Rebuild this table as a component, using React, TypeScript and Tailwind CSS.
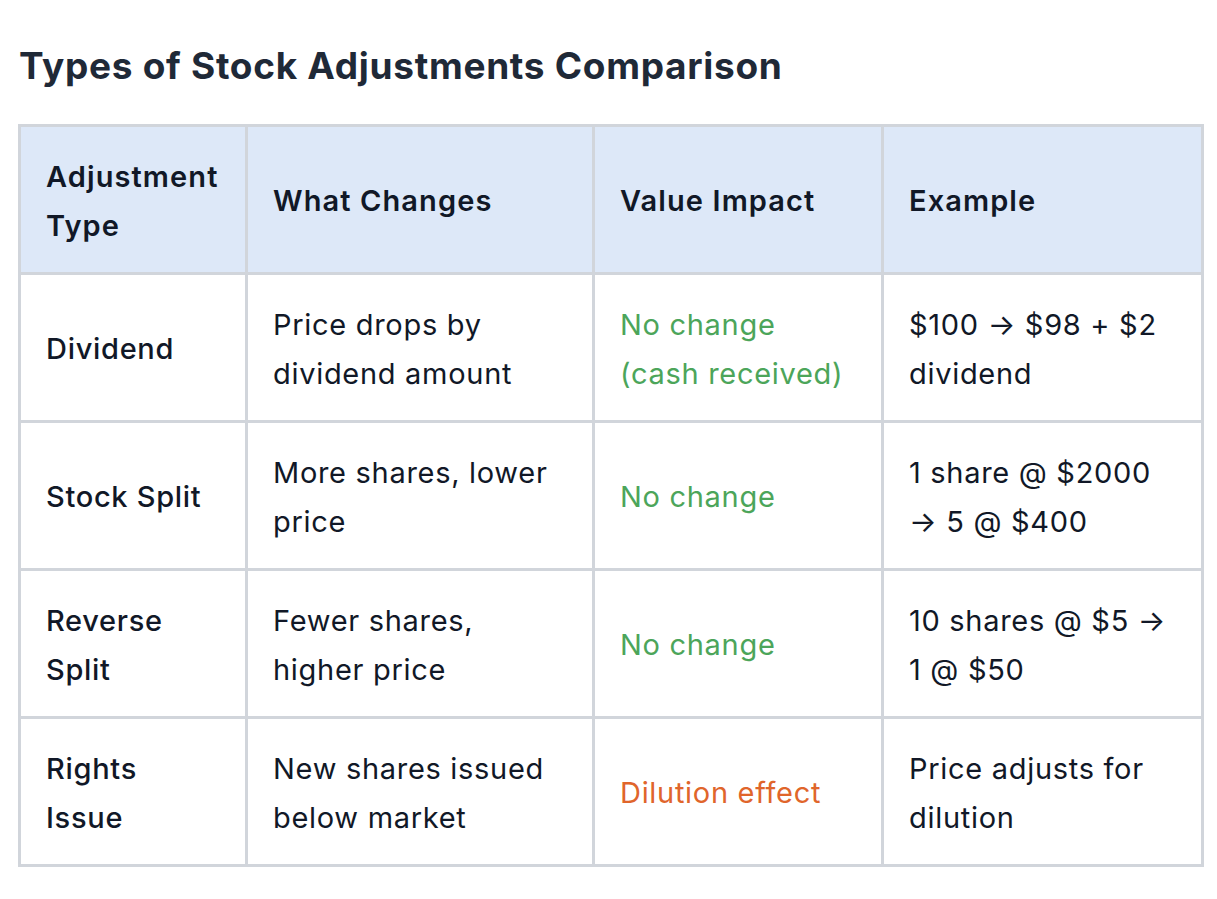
import React from "react";

type Row = {
  type: string;
  changes: string;
  impact: string;
  tone: "good" | "warn";
  example: string;
};

const rows: Row[] = [
  {
    type: "Dividend",
    changes: "Price drops by dividend amount",
    impact: "No change (cash received)",
    tone: "good",
    example: "$100 → $98 + $2 dividend",
  },
  {
    type: "Stock Split",
    changes: "More shares, lower price",
    impact: "No change",
    tone: "good",
    example: "1 share @ $2000 → 5 @ $400",
  },
  {
    type: "Reverse Split",
    changes: "Fewer shares, higher price",
    impact: "No change",
    tone: "good",
    example: "10 shares @ $5 → 1 @ $50",
  },
  {
    type: "Rights Issue",
    changes: "New shares issued below market",
    impact: "Dilution effect",
    tone: "warn",
    example: "Price adjusts for dilution",
  },
];

const cell = "border-[3px] border-[#d1d5db] pl-[25px] pr-[26px] pt-[26px] pb-[22px] align-middle text-left";

export default function App() {
  return (
    <div className="min-h-screen bg-white pl-[18px] pr-[14px] pt-[40px] font-['Inter','Noto_Sans',sans-serif] text-[29px] leading-[48.5px] tracking-[0.7px] text-[#111827]">
      <h2 className="mb-[32px] pl-[1px] text-[37px] font-bold leading-[52px] tracking-[0.7px] text-[#1f2937]">
        Types of Stock Adjustments Comparison
      </h2>
      <table className="w-[1183px] table-fixed border-collapse">
        <colgroup>
          <col className="w-[227px]" />
          <col className="w-[347px]" />
          <col className="w-[289px]" />
          <col className="w-[320px]" />
        </colgroup>
        <thead>
          <tr className="bg-[#dde8f8]">
            <th className={`${cell} font-semibold tracking-[1.1px]`}>Adjustment Type</th>
            <th className={`${cell} font-semibold tracking-[1.1px]`}>What Changes</th>
            <th className={`${cell} font-semibold tracking-[1.1px]`}>Value Impact</th>
            <th className={`${cell} font-semibold tracking-[1.1px]`}>Example</th>
          </tr>
        </thead>
        <tbody>
          {rows.map((r) => (
            <tr key={r.type}>
              <td className={`${cell} font-medium`}>{r.type}</td>
              <td className={cell}>{r.changes}</td>
              <td
                className={`${cell} ${
                  r.tone === "good" ? "text-[#4ca55a]" : "text-[#e0652b]"
                }`}
              >
                {r.impact}
              </td>
              <td className={cell}>{r.example}</td>
            </tr>
          ))}
        </tbody>
      </table>
    </div>
  );
}
